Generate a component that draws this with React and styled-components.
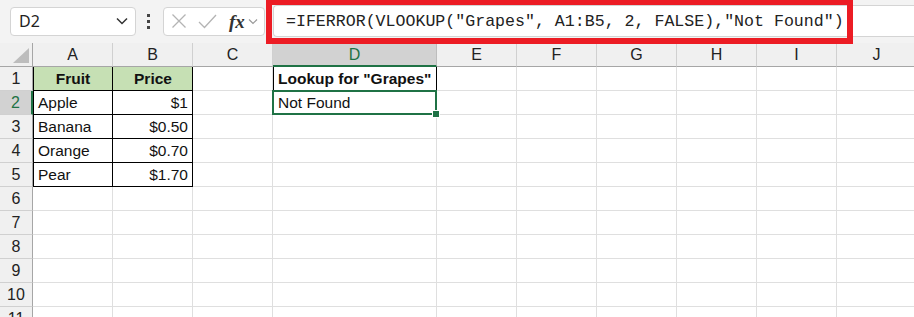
import React from 'react';
import styled, { createGlobalStyle } from 'styled-components';

const GlobalStyle = createGlobalStyle`
  html, body {
    margin: 0;
    padding: 0;
    background: #ffffff;
    overflow: hidden;
  }
  * { box-sizing: border-box; }
`;

const GREEN = '#1f7245';
const GRID = '#dfdfdf';
const COLS = ['A', 'B', 'C', 'D', 'E', 'F', 'G', 'H', 'I', 'J'];
const WIDTHS = [80, 80, 80, 164, 80, 80, 80, 80, 80, 80];

const data = {
  1: { A: { v: 'Fruit', head: true }, B: { v: 'Price', head: true }, D: { v: 'Lookup for "Grapes"', bold: true } },
  2: { A: { v: 'Apple' }, B: { v: '$1', num: true }, D: { v: 'Not Found' } },
  3: { A: { v: 'Banana' }, B: { v: '$0.50', num: true } },
  4: { A: { v: 'Orange' }, B: { v: '$0.70', num: true } },
  5: { A: { v: 'Pear' }, B: { v: '$1.70', num: true } },
};

function App() {
  const rows = Array.from({ length: 11 }, (_, i) => i + 1);
  return (
    <Page>
      <GlobalStyle />
      <Toolbar>
        <NameBox>
          <span>D2</span>
          <svg width="12" height="8" viewBox="0 0 12 8">
            <polyline points="1,1.5 6,6.5 11,1.5" fill="none" stroke="#333" strokeWidth="1.5" />
          </svg>
        </NameBox>
        <Dots>
          <i /><i /><i />
        </Dots>
        <FuncBox>
          <svg width="16" height="16" viewBox="0 0 16 16">
            <path d="M1.5 1.5 L14.5 14.5 M14.5 1.5 L1.5 14.5" stroke="#b4b4b4" strokeWidth="1.3" />
          </svg>
          <svg width="19" height="16" viewBox="0 0 19 16">
            <polyline points="1,9 6.5,14.5 18,2" fill="none" stroke="#b4b4b4" strokeWidth="1.3" />
          </svg>
          <Fx>fx</Fx>
          <svg width="10" height="7" viewBox="0 0 10 7">
            <polyline points="1,1.5 5,5.5 9,1.5" fill="none" stroke="#999" strokeWidth="1.2" />
          </svg>
        </FuncBox>
        <FormulaBox>
          <FormulaText>=IFERROR(VLOOKUP("Grapes", A1:B5, 2, FALSE),"Not Found")</FormulaText>
          <RedMark />
        </FormulaBox>
      </Toolbar>
      <Sheet>
        <Corner>
          <svg width="16" height="15" viewBox="0 0 16 15">
            <polygon points="16,0 16,15 0,15" fill="#bdbdbd" />
          </svg>
        </Corner>
        {COLS.map((c) => (
          <ColHead key={c} $active={c === 'D'}>{c}</ColHead>
        ))}
        {rows.map((r) => (
          <React.Fragment key={r}>
            <RowHead $active={r === 2}>{r}</RowHead>
            {COLS.map((c) => {
              const cell = (data[r] && data[r][c]) || {};
              const inTable = r <= 5 && (c === 'A' || c === 'B');
              return (
                <Cell
                  key={c}
                  $boxed={inTable || (r === 1 && c === 'D')}
                  $leftLine={(inTable && c === 'A') || (r === 1 && c === 'D')}
                  $fill={cell.head}
                  $bold={cell.head || cell.bold}
                  $align={cell.head ? 'center' : cell.num ? 'right' : 'left'}
                  $selected={r === 2 && c === 'D'}
                >
                  {cell.v}
                </Cell>
              );
            })}
          </React.Fragment>
        ))}
      </Sheet>
    </Page>
  );
}

export default App;

const Page = styled.div`
  width: 914px;
  height: 317px;
  overflow: hidden;
  background: #fff;
  font-family: "Liberation Sans", Arial, sans-serif;
`;

const Toolbar = styled.div`
  height: 43px;
  background: #f3f3f3;
  display: flex;
  align-items: center;
  padding: 0 0 1px 10px;
`;

const NameBox = styled.div`
  width: 126px;
  height: 29px;
  background: #fff;
  border: 1px solid #d4d4d4;
  border-radius: 4px;
  display: flex;
  align-items: center;
  justify-content: space-between;
  padding: 0 7px 0 8px;
  font-family: "Noto Sans", "Liberation Sans", sans-serif;
  font-size: 16px;
  color: #222;
`;

const Dots = styled.div`
  display: flex;
  flex-direction: column;
  gap: 3px;
  margin: 0 13px 0 11px;
  i {
    display: block;
    width: 3px;
    height: 3px;
    background: #444;
  }
`;

const FuncBox = styled.div`
  width: 102px;
  height: 29px;
  background: #fff;
  border: 1px solid #d4d4d4;
  border-radius: 4px;
  display: flex;
  align-items: center;
  padding: 0 0 0 7px;
  svg:nth-child(1) { margin-right: 11px; }
  svg:nth-child(2) { margin-right: 12px; }
`;

const Fx = styled.span`
  font-family: "Liberation Serif", "Times New Roman", serif;
  font-style: italic;
  font-weight: bold;
  font-size: 19px;
  color: #333;
  margin-right: 3px;
  line-height: 1;
`;

const FormulaBox = styled.div`
  position: relative;
  flex: 1;
  height: 32px;
  margin-left: 8px;
  background: #fff;
  border: 1px solid #d4d4d4;
  border-right: none;
  border-radius: 4px 0 0 4px;
  display: flex;
  align-items: center;
  padding-left: 12px;
`;

const FormulaText = styled.span`
  font-family: "Liberation Mono", "Courier New", monospace;
  font-size: 16.6px;
  color: #222;
  white-space: nowrap;
`;

const RedMark = styled.div`
  position: absolute;
  left: -8px;
  top: -7px;
  width: 587px;
  height: 45px;
  border: 6px solid #ec1c24;
  pointer-events: none;
`;

const Sheet = styled.div`
  display: grid;
  grid-template-columns: 33px ${WIDTHS.map((w) => w + 'px').join(' ')};
  grid-auto-rows: 24px;
  width: 917px;
  font-size: 15.5px;
  color: #111;
`;

const Corner = styled.div`
  background: #f0f0f0;
  border-right: 1px solid #a6a6a6;
  border-bottom: 1px solid #a6a6a6;
  display: flex;
  align-items: flex-end;
  justify-content: flex-end;
  padding: 0 3px 3px 0;
`;

const ColHead = styled.div`
  background: ${(p) => (p.$active ? '#d2d2d2' : '#f0f0f0')};
  color: ${(p) => (p.$active ? GREEN : '#222')};
  border-right: 1px solid ${(p) => (p.$active ? '#bdbdbd' : '#d0d0d0')};
  border-bottom: ${(p) => (p.$active ? `2px solid ${GREEN}` : '1px solid #a6a6a6')};
  display: flex;
  align-items: center;
  justify-content: center;
  font-size: 16px;
  padding-top: ${(p) => (p.$active ? '1px' : '0')};
`;

const RowHead = styled.div`
  background: ${(p) => (p.$active ? '#d2d2d2' : '#f0f0f0')};
  color: ${(p) => (p.$active ? GREEN : '#222')};
  border-right: ${(p) => (p.$active ? `2px solid ${GREEN}` : '1px solid #a6a6a6')};
  border-bottom: 1px solid #d0d0d0;
  display: flex;
  align-items: center;
  justify-content: center;
  font-size: 16px;
`;

const Cell = styled.div`
  position: relative;
  background: ${(p) => (p.$fill ? '#c6e0b4' : '#fff')};
  border-right: 1px solid ${(p) => (p.$boxed ? '#000' : GRID)};
  border-bottom: 1px solid ${(p) => (p.$boxed ? '#000' : GRID)};
  box-shadow: ${(p) => (p.$leftLine ? 'inset 1px 0 0 #000' : 'none')};
  font-weight: ${(p) => (p.$bold ? 'bold' : 'normal')};
  text-align: ${(p) => p.$align};
  padding: 0 4px 0 5px;
  line-height: 23px;
  white-space: nowrap;

  ${(p) =>
    p.$selected &&
    `
    &::after {
      content: '';
      position: absolute;
      left: -1px;
      top: -1px;
      right: -1px;
      bottom: -1px;
      border: 2px solid ${GREEN};
    }
    &::before {
      content: '';
      position: absolute;
      right: -4px;
      bottom: -4px;
      width: 6px;
      height: 6px;
      background: ${GREEN};
      border: 1px solid #fff;
      z-index: 2;
    }
  `}
`;
